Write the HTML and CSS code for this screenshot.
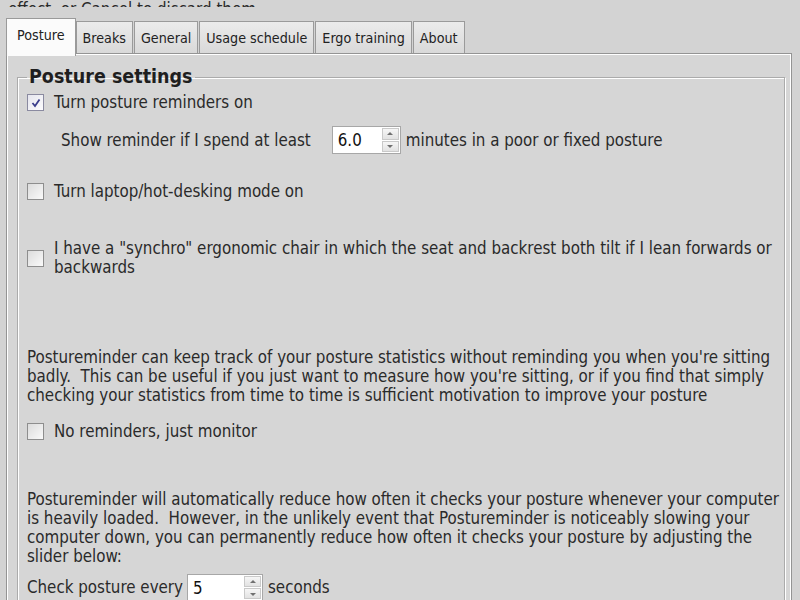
FILE: index.html
```html
<!DOCTYPE html>
<html lang="en">
<head>
  <meta charset="UTF-8">
  <title>Postureminder options</title>
  <link rel="stylesheet" href="styles.css">
</head>
<body>

<div class="caption">effect, or Cancel to discard them</div>

<div class="tabs">
  <div class="tab active">Posture</div>
  <div class="tab">Breaks</div>
  <div class="tab">General</div>
  <div class="tab">Usage schedule</div>
  <div class="tab">Ergo training</div>
  <div class="tab">About</div>
</div>

<div class="panel">
  <fieldset class="group">
    <legend>Posture settings</legend>

    <div class="row r1">
      <span class="check checked">
        <svg width="10" height="10" viewBox="0 0 10 10"><path d="M1.5 5 L4 8 L8.5 1.5" fill="none" stroke="#3a3d8c" stroke-width="1.8"/></svg>
      </span>
      <span>Turn posture reminders on</span>
    </div>

    <div class="row r2">
      <span class="lbl-indent">Show reminder if I spend at least</span>
      <span class="spin wide">
        <span class="val">6.0</span>
        <span class="arrows"><span class="up"></span><span class="down"></span></span>
      </span>
      <span>minutes in a poor or fixed posture</span>
    </div>

    <div class="row r3">
      <span class="check"></span>
      <span>Turn laptop/hot-desking mode on</span>
    </div>

    <div class="row r4">
      <span class="check"></span>
      <span>I have a "synchro" ergonomic chair in which the seat and backrest both tilt if I lean forwards or<br>backwards</span>
    </div>

    <p class="note n1">Postureminder can keep track of your posture statistics without reminding you when you're sitting<br>badly.&nbsp; This can be useful if you just want to measure how you're sitting, or if you find that simply<br>checking your statistics from time to time is sufficient motivation to improve your posture</p>

    <div class="row r5">
      <span class="check"></span>
      <span>No reminders, just monitor</span>
    </div>

    <p class="note n2">Postureminder will automatically reduce how often it checks your posture whenever your computer<br>is heavily loaded.&nbsp; However, in the unlikely event that Postureminder is noticeably slowing your<br>computer down, you can permanently reduce how often it checks your posture by adjusting the<br>slider below:</p>

    <div class="row r6">
      <span>Check posture every</span>
      <span class="spin narrow">
        <span class="val">5</span>
        <span class="arrows"><span class="up"></span><span class="down"></span></span>
      </span>
      <span>seconds</span>
    </div>
  </fieldset>
</div>

</body>
</html>
```

FILE: styles.css
```css
body {
  margin: 0;
  background: #d3d3d3;
  font-family: "DejaVu Sans Condensed", "DejaVu Sans", sans-serif;
  font-size: 16.8px;
  color: #2a2a2a;
  overflow: hidden;
  height: 600px;
}
.caption {
  height: 7px;
  overflow: hidden;
  line-height: 18px;
  padding-left: 8px;
  margin-bottom: 12px;
}
.tabs {
  display: flex;
  align-items: flex-end;
  padding-left: 6px;
  height: 34px;
  position: relative;
  z-index: 2;
}
.tab {
  height: 32px;
  line-height: 32px;
  padding: 0 6px;
  margin-right: 1px;
  font-size: 14.2px;
  color: #222;
  border: 1px solid #9a9a9a;
  border-bottom: none;
  background: linear-gradient(#ebebeb, #d9d9d9);
  box-sizing: border-box;
}
.tab.active {
  height: 38px;
  line-height: 32px;
  margin-bottom: -3px;
  padding: 0 10px;
  background: #fbfbfb;
  margin-right: 0;
}
.panel {
  margin: 0 8px 0 6px;
  height: 600px;
  border: 1px solid #949494;
  box-shadow: inset 1px 1px 0 #fff, inset -1px 0 0 #fff;
  background: #d6d6d6;
  padding: 12px 6px 0 10px;
  box-sizing: border-box;
}
.group {
  margin: 0;
  padding: 0 0 0 9px;
  border: 1px solid #ababab;
  box-shadow: inset 1px 1px 0 #fff, 1px 1px 0 #fff;
  min-width: 0;
  height: 600px;
}
.group legend {
  padding: 0 2px;
  font-weight: bold;
  font-size: 19.5px;
  line-height: 22px;
  color: #1f1f1f;
}
.row {
  display: flex;
  align-items: center;
  gap: 10px;
  line-height: 19px;
}
.check {
  width: 15px;
  height: 15px;
  border: 1px solid #8e8e8e;
  background: linear-gradient(135deg, #dcdcdc, #fafafa);
  display: flex;
  align-items: center;
  justify-content: center;
  flex: none;
}
.check.checked {
  border-color: #8a8aa0;
  background: linear-gradient(135deg, #e6e6ee, #fbfbfd);
}
.lbl-indent {
  margin-left: 34px;
  margin-right: 11px;
}
.spin {
  display: flex;
  height: 28px;
  border: 1px solid #a7a7a7;
  background: #fff;
  box-sizing: border-box;
  margin-right: -5px;
}
.spin.wide { width: 69px; }
.spin.narrow { width: 76px; height: 27px; margin-left: -6px; }
.spin .val {
  flex: 1;
  padding-left: 5px;
  line-height: 26px;
  color: #111;
}
.arrows {
  width: 17px;
  display: flex;
  flex-direction: column;
  gap: 1px;
  padding: 1px;
}
.arrows span {
  flex: 1;
  border: 1px solid #c9c9c9;
  background: linear-gradient(#f6f6f6, #e2e2e2);
  position: relative;
}
.arrows .up::after,
.arrows .down::after {
  content: "";
  position: absolute;
  left: 50%;
  top: 50%;
  margin-left: -3px;
  border-left: 3px solid transparent;
  border-right: 3px solid transparent;
}
.arrows .up::after {
  margin-top: -2px;
  border-bottom: 3px solid #707070;
}
.arrows .down::after {
  margin-top: -1px;
  border-top: 3px solid #707070;
}
.r1 { margin-top: 5px; }
.r2 { margin-top: 14px; }
.r3 { margin-top: 28px; }
.r4 { margin-top: 38px; }
.note {
  margin: 0;
  line-height: 19px;
  white-space: nowrap;
}
.n1 { margin-top: 71px; }
.r5 { margin-top: 17px; }
.n2 { margin-top: 49px; }
.r6 { margin-top: 8px; }
```
